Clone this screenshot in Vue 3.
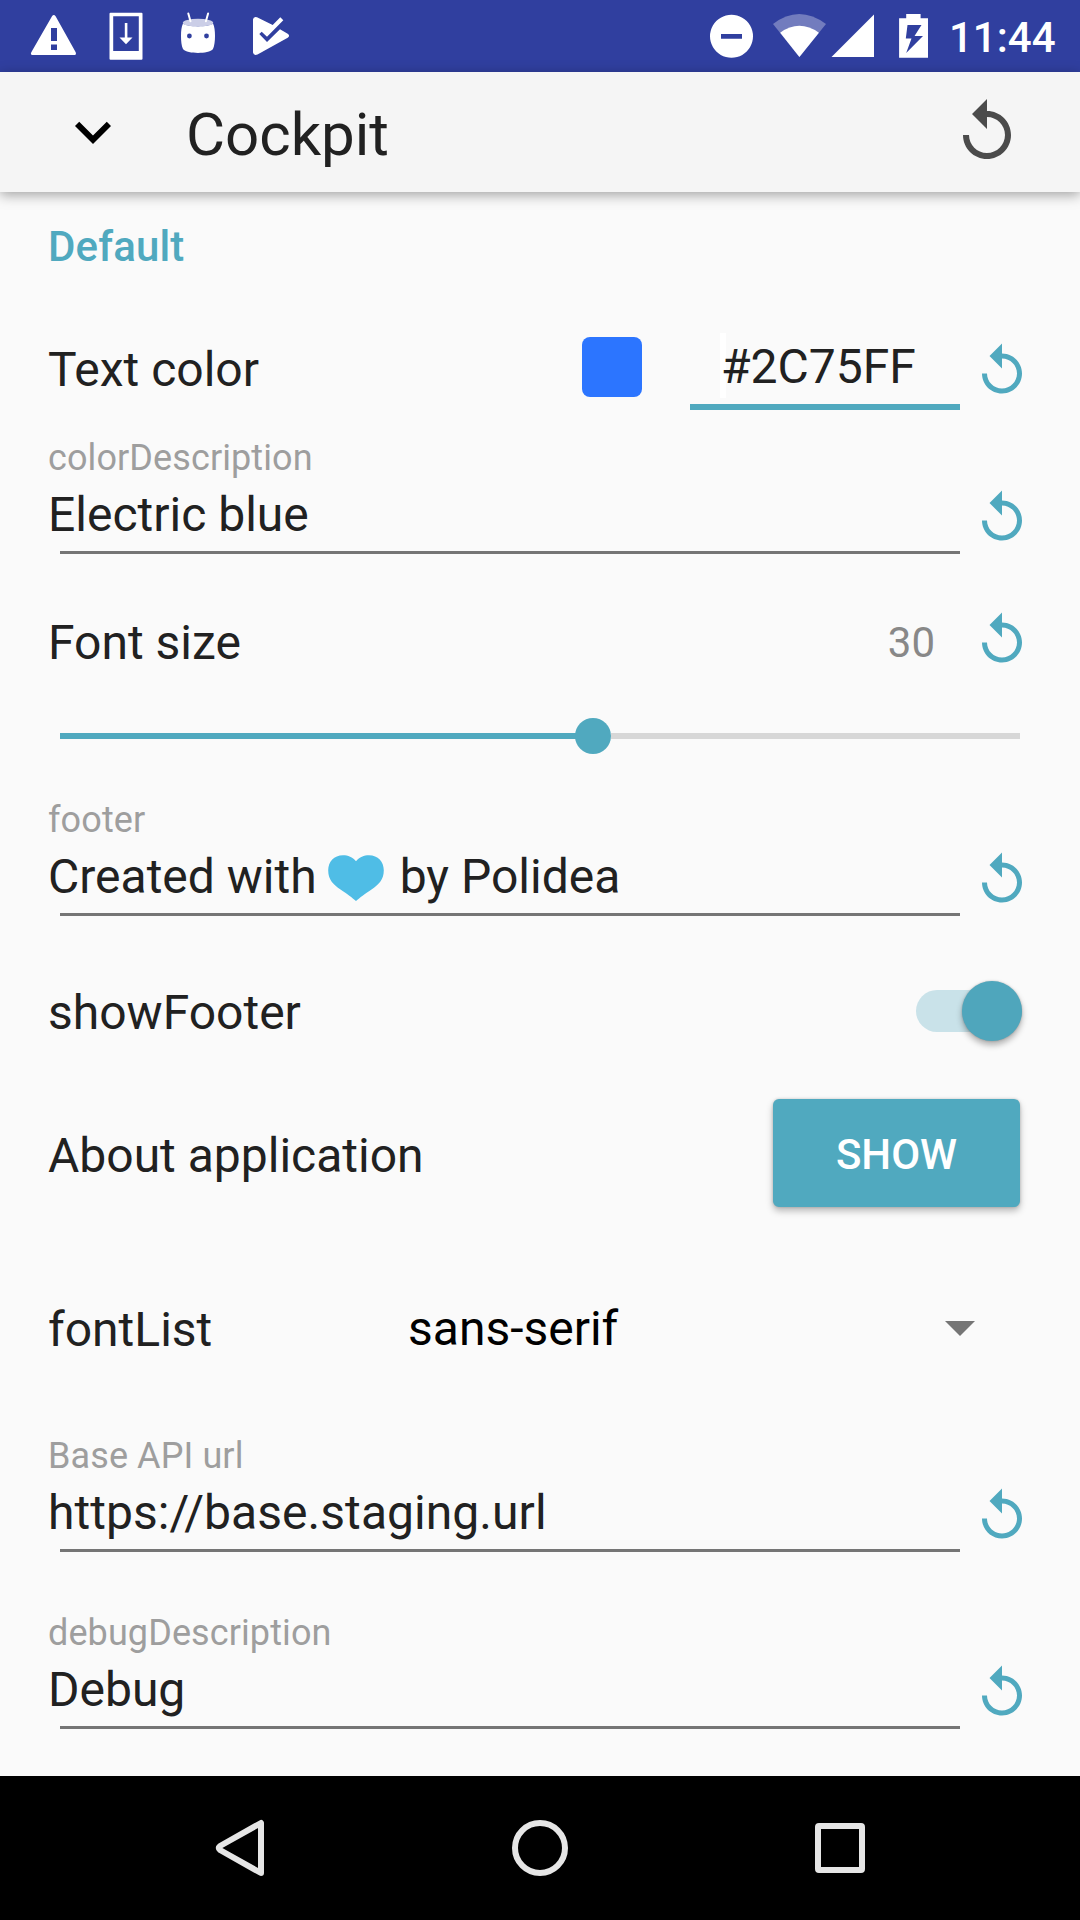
<script setup>
import { h } from 'vue'

const ResetIcon = () =>
  h('svg', { viewBox: '0 0 24 24', fill: 'currentColor' }, [
    h('path', {
      d: 'M12 5V1L7 6l5 5V7c3.31 0 6 2.69 6 6s-2.69 6-6 6-6-2.69-6-6H4c0 4.42 3.58 8 8 8s8-3.58 8-8-3.58-8-8-8z',
    }),
  ])
</script>

<template>
  <div class="screen">
    <header class="status">
      <svg class="status-left" viewBox="0 0 300 72" fill="#fff">
        <path fill-rule="evenodd" d="M52 16.2q1.8-2.6 3.6 0L75.7 52.2q1 2.8-1.6 2.8H33q-3 0-1.700-2.800zM51 28v13h6V28zM51 44.500v5.500h6v-5.500z" />
        <path fill-rule="evenodd" d="M110.500 12.700h31q1 0 1 1v45q0 1-1 1h-31q-1 0-1-1v-45q0-1 1-1zM113.200 16.200v34.800h25.600V16.200z" />
        <path d="M124.800 23h2.600v14.500h5.100L126 44.200l-6.500-6.700h5.300z" />
        <g>
          <ellipse cx="198" cy="22.700" rx="15.200" ry="3.900" opacity=".75" />
          <path d="M183 23.500c2 2 8 2.900 15 2.900s13-.9 15-2.900c1.500 3 2 7.500 2 12.500s-.6 10-2 13c-2 3-9 3.900-15 3.900s-13-.9-15-3.900c-1.500-3-2-8-2-13s.5-9.500 2-12.500z" />
          <path d="M188.300 13.500l2.200 7.700M208.100 13.500l-2.200 7.700" stroke="#fff" stroke-width="2" stroke-linecap="round" />
          <circle cx="189.400" cy="36" r="2.400" fill="#303f9f" />
          <circle cx="206.500" cy="36" r="2.400" fill="#303f9f" />
        </g>
        <path d="M253 19.500Q253.300 16.300 257 17.200L272.700 25 280.300 17.300 283.300 20.200 267 36.700 261.700 31.700 259.300 34.100 267 42 280 29.300 287.700 33.700Q290.500 35.700 287.700 37.700L257.500 54.600Q253.500 55.800 253 52.500z" />
      </svg>
      <svg class="status-right" viewBox="700 0 240 72" fill="#fff">
        <path fill-rule="evenodd" d="M731.500 14.800a21.500 21.500 0 1 0 .01 0zM721 34h21v4.800h-21z" />
        <path opacity=".32" d="M773 24q26-20 53 0L799.400 57z" />
        <path d="M780.200 32.700q19-13.700 38.700 0L799.400 57z" />
        <path d="M874 14.500V57h-42.500z" />
        <path fill-rule="evenodd" d="M906.200 14h14.400v4.200h7.400V57.800h-28.900V18.200h7.100zM907.500 25l-1.700 13.500h5.700l-5.300 14.500L923 36h-8.500l7-11z" />
      </svg>
      <span class="clock">11:44</span>
    </header>

    <div class="toolbar">
      <svg class="chevron" viewBox="0 0 24 24"><path d="M16.590 8.590L12 13.170 7.410 8.590 6 10l6 6 6-6z" /></svg>
      <h1>Cockpit</h1>
      <ResetIcon class="reset-all" />
    </div>

    <main>
      <h2>Default</h2>

      <div class="row color-row">
        <span class="label">Text color</span>
        <span class="swatch"></span>
        <div class="color-input"><i class="caret"></i>#2C75FF</div>
        <ResetIcon class="reset" />
      </div>

      <div class="field">
        <div class="entry">
          <div class="hint">colorDescription</div>
          <div class="value">Electric blue</div>
        </div>
        <ResetIcon class="reset" />
      </div>

      <div class="row size-row">
        <span class="label">Font size</span>
        <span class="number">30</span>
        <ResetIcon class="reset" />
      </div>
      <div class="slider">
        <div class="filled"></div>
        <div class="thumb"></div>
        <div class="rest"></div>
      </div>

      <div class="field footer-field">
        <div class="entry">
          <div class="hint">footer</div>
          <div class="value heart-line">
            <span>Created with</span>
            <svg viewBox="0 0 56 46"><path fill="#4fbde6" d="M28 6.300C31.500 2 36 .2 41 .2c9 0 14.800 6.400 14.800 15 0 9.600-5.300 14.400-12.300 19.300C36.500 39.300 32 42.500 28 46c-4-3.500-8.500-6.700-15.500-11.500C5.500 29.600.2 24.800.2 15.200.2 6.600 6 .2 15 .2c5 0 9.500 1.800 13 6.100z" /></svg>
            <span>by Polidea</span>
          </div>
        </div>
        <ResetIcon class="reset" />
      </div>

      <div class="row toggle-row">
        <span class="label">showFooter</span>
        <div class="toggle"><div class="knob"></div></div>
      </div>

      <div class="row about-row">
        <span class="label">About application</span>
        <button>SHOW</button>
      </div>

      <div class="row list-row">
        <span class="label">fontList</span>
        <span class="choice">sans-serif</span>
        <svg class="arrow" viewBox="0 0 30 15"><path fill="#757575" d="M0 0h30L15 15z" /></svg>
      </div>

      <div class="field api-field">
        <div class="entry">
          <div class="hint">Base API url</div>
          <div class="value url">https://base.staging.url</div>
        </div>
        <ResetIcon class="reset" />
      </div>

      <div class="field debug-field">
        <div class="entry">
          <div class="hint">debugDescription</div>
          <div class="value">Debug</div>
        </div>
        <ResetIcon class="reset" />
      </div>
    </main>

    <nav>
      <svg viewBox="0 0 72 72"><path d="M57 11v50L16 38q-2.500-2 0-4z" /></svg>
      <svg viewBox="0 0 72 72"><circle cx="36" cy="36" r="25" /></svg>
      <svg viewBox="0 0 72 72"><rect x="14" y="14" width="44" height="44" rx="1" /></svg>
    </nav>
  </div>
</template>

<style>
body {
  margin: 0;
}
</style>

<style scoped>
.screen {
  width: 1080px;
  height: 1920px;
  display: flex;
  flex-direction: column;
  overflow: hidden;
  background: #fafafa;
  color: #212121;
  font-family: Roboto, "Liberation Sans", sans-serif;
}
svg {
  display: block;
  flex: none;
}
.status {
  height: 72px;
  flex: none;
  display: flex;
  align-items: center;
  background: #303f9f;
}
.status-left {
  width: 300px;
  height: 72px;
}
.status-right {
  width: 240px;
  height: 72px;
  margin-left: auto;
}
.clock {
  width: 131px;
  margin: 4px 0 0 9px;
  color: #fff;
  font-size: 42px;
  font-weight: 500;
  line-height: 50px;
}
.toolbar {
  height: 120px;
  flex: none;
  display: flex;
  align-items: center;
  background: #f5f5f5;
  box-shadow: 0 3px 12px rgba(0, 0, 0, 0.36);
}
.chevron {
  width: 72px;
  height: 72px;
  margin-left: 57px;
}
h1 {
  flex: 1;
  margin: 5px 0 0 57px;
  font-size: 60px;
  font-weight: 400;
  line-height: 72px;
}
.reset-all {
  width: 72px;
  height: 72px;
  margin-right: 57px;
  color: #4b4b4b;
}
main {
  height: 1584px;
  flex: none;
  box-sizing: border-box;
  padding: 0 48px;
}
h2 {
  margin: 0;
  font-size: 42px;
  font-weight: 500;
  line-height: 110px;
  letter-spacing: 0.15px;
  color: #50a9bf;
}
.row {
  display: flex;
  align-items: center;
  font-size: 48px;
}
.label {
  line-height: 56px;
}
.reset {
  width: 60px;
  height: 60px;
  color: #50a9bf;
}
.color-row {
  height: 135px;
}
.color-row .reset {
  margin: 3px 0 0 12px;
}
.swatch {
  width: 60px;
  height: 60px;
  margin: 0 48px 5px auto;
  border-radius: 8px;
  background: #2c75ff;
}
.color-input {
  position: relative;
  z-index: 0;
  box-sizing: border-box;
  width: 270px;
  height: 76px;
  margin-top: 5px;
  padding: 5px 0 0 31px;
  border-bottom: 6px solid #50a9bf;
  line-height: 56px;
}
.caret {
  position: absolute;
  left: 30px;
  top: -1px;
  width: 6px;
  height: 65px;
  background: #fff;
  z-index: -1;
}
.field {
  display: flex;
  align-items: flex-start;
  height: 117px;
}
.entry {
  width: 912px;
  height: 117px;
  background: linear-gradient(#757575, #757575) 12px 100% / 900px 3px no-repeat;
}
.field .reset {
  margin: 51px 0 0 12px;
}
.hint {
  font-size: 36px;
  line-height: 42px;
  letter-spacing: 0.1px;
  color: #9e9e9e;
}
.value {
  margin-top: 8px;
  font-size: 48px;
  line-height: 56px;
}
.url {
  letter-spacing: 0.06px;
}
.heart-line {
  display: flex;
}
.heart-line svg {
  width: 56px;
  height: 46px;
  margin: 6px 16px 0 11px;
}
.size-row {
  height: 91px;
  margin-top: 43px;
}
.number {
  margin-left: auto;
  font-size: 42px;
  color: #888;
}
.size-row .reset {
  margin: 0 0 5px 37px;
}
.slider {
  height: 36px;
  margin: 30px 12px 0;
  display: flex;
  align-items: center;
}
.filled {
  width: 516px;
  height: 6px;
  background: #50a9bf;
}
.thumb {
  width: 36px;
  height: 36px;
  margin-left: -1px;
  border-radius: 50%;
  background: #50a9bf;
}
.rest {
  flex: 1;
  height: 6px;
  background: #d7d7d7;
}
.footer-field {
  margin-top: 45px;
}
.toggle-row {
  height: 72px;
  margin-top: 61px;
}
.toggle {
  width: 106px;
  height: 42px;
  margin: 0 10px 4px auto;
  display: flex;
  align-items: center;
  justify-content: flex-end;
  border-radius: 21px;
  background: #c9e2e9;
}
.knob {
  width: 60px;
  height: 60px;
  border-radius: 50%;
  background: #4fa6bc;
  box-shadow: 0 0 2px rgba(0, 0, 0, 0.22), 0 4px 6px rgba(0, 0, 0, 0.3);
}
.about-row {
  height: 108px;
  margin-top: 50px;
}
.about-row .label {
  margin-top: 5px;
}
button {
  width: 247px;
  height: 108px;
  margin: 0 12px 0 auto;
  padding: 4px 0 0;
  border: 0;
  border-radius: 6px;
  background: #50a9bf;
  box-shadow: 0 0 3px rgba(0, 0, 0, 0.18), 0 4px 7px rgba(0, 0, 0, 0.26);
  color: #fff;
  font: 500 42px/50px Roboto, sans-serif;
}
.list-row {
  height: 72px;
  margin-top: 87px;
}
.list-row .label {
  width: 360px;
}
.choice {
  flex: 1;
  margin-top: -2px;
  line-height: 56px;
  color: #000;
}
.arrow {
  width: 30px;
  height: 15px;
  margin: 0 57px 3px 0;
}
.api-field {
  margin-top: 69px;
}
.debug-field {
  margin-top: 60px;
}
nav {
  height: 144px;
  flex: none;
  display: flex;
  align-items: center;
  justify-content: center;
  gap: 228px;
  background: #000;
}
nav svg {
  width: 72px;
  height: 72px;
  fill: none;
  stroke: #e6e6e6;
  stroke-width: 6;
  stroke-linejoin: round;
}
</style>
